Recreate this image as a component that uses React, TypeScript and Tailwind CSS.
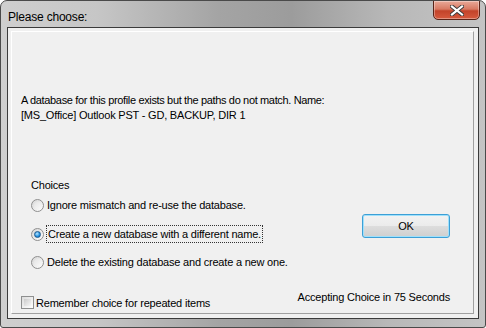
import React from 'react';

const Radio: React.FC<{ checked?: boolean }> = ({ checked }) => (
  <span className="relative w-[13px] h-[13px] shrink-0 rounded-full border border-[#8f8f8f] bg-[linear-gradient(135deg,#d6d6d6,#ffffff)] flex items-center justify-center">
    {checked ? (
      <span className="w-[7px] h-[7px] rounded-full border border-[#1e5a8e] bg-[radial-gradient(circle_at_40%_35%,#b9e6ff,#1f8fe0_60%,#0b5ea8)]" />
    ) : (
      <span className="w-[7px] h-[7px] rounded-full bg-[linear-gradient(135deg,#e4e4e4,#f8f8f8)]" />
    )}
  </span>
);

const CloseX = () => (
  <svg width="14" height="11" viewBox="0 0 14 11">
    <path d="M2 1.5 L12 9.5 M12 1.5 L2 9.5" stroke="#3a3a3a" strokeWidth="4" strokeLinecap="square" />
    <path d="M2 1.5 L12 9.5 M12 1.5 L2 9.5" stroke="#ffffff" strokeWidth="2.2" strokeLinecap="square" />
  </svg>
);

export default function App() {
  return (
    <div className="w-[486px] h-[328px] font-['Liberation_Sans',Arial,sans-serif] text-[11px] tracking-[-0.2px] text-black">
      <div className="w-full h-full flex flex-col rounded-t-[7px] rounded-b-[3px] border border-[#4a4a4a] bg-[linear-gradient(90deg,#cfcfcf_0%,#c6c6c6_20%,#a4a4a4_45%,#9c9c9c_60%,#b8b8b8_80%,#c4c4c4_100%)] overflow-hidden">
        {/* title bar */}
        <div className="h-[26px] flex items-start justify-between pl-[7px] pr-[5px]">
          <span className="mt-[7px] text-[12px] tracking-[-0.2px] text-black">Please choose:</span>
          <button className="w-[47px] h-[20px] -mt-[1px] flex items-center justify-center rounded-b-[5px] border border-[#5a2418] bg-[linear-gradient(180deg,#e9a998_0%,#d87a63_45%,#c3432a_55%,#d65a3e_100%)] shadow-[inset_0_0_0_1px_rgba(255,255,255,0.35)]">
            <CloseX />
          </button>
        </div>
        {/* client area */}
        <div className="flex-1 mx-[6px] mb-[8px] border border-[#3b3b3b] bg-[#f0f0f0] pt-[3px] pl-[3px] pr-[4px] pb-[4px] flex">
          <div className="flex-1 flex flex-col border-l border-t border-white border-r border-b border-r-[#a0a0a0] border-b-[#a0a0a0] pl-[9px] pr-[23px]">
            <div className="mt-[61px] leading-[15px]">
              <p className="tracking-[-0.35px]">A database for this profile exists but the paths do not match. Name:</p>
              <p>[MS_Office] Outlook PST - GD, BACKUP, DIR 1</p>
            </div>
            <div className="mt-[55px] flex">
              <div className="flex-1 pl-[10px]">
                <p className="leading-[15px]">Choices</p>
                <div className="mt-[5px] flex flex-col gap-[13px]">
                  <label className="flex items-center gap-[3px] h-[15px]">
                    <Radio />
                    <span>Ignore mismatch and re-use the database.</span>
                  </label>
                  <label className="flex items-center gap-[2px] h-[16px]">
                    <Radio checked />
                    <span className="px-[1px] border border-dotted border-[#333]">Create a new database with a different name.</span>
                  </label>
                  <label className="flex items-center gap-[3px] h-[15px]">
                    <Radio />
                    <span>Delete the existing database and create a new one.</span>
                  </label>
                </div>
              </div>
              <div className="pt-[36px]">
                <button className="w-[88px] h-[24px] rounded-[3px] border border-[#3c9fd6] shadow-[inset_0_0_0_1px_#9fe0fb] bg-[linear-gradient(180deg,#f2f2f2_0%,#ebebeb_50%,#dddddd_50%,#cfcfcf_100%)] text-[11px]">
                  OK
                </button>
              </div>
            </div>
            <div className="mt-auto mb-[2px] flex items-end justify-between">
              <label className="flex items-center gap-[2px]">
                <span className="w-[13px] h-[13px] border border-[#8e8f8f] bg-[linear-gradient(135deg,#dcdcdc,#ffffff)] p-[2px]">
                  <span className="block w-full h-full bg-[linear-gradient(135deg,#cbcbcb,#f6f6f6)]" />
                </span>
                <span>Remember choice for repeated items</span>
              </label>
              <span className="mb-[6px]">Accepting Choice in 75 Seconds</span>
            </div>
          </div>
        </div>
      </div>
    </div>
  );
}
